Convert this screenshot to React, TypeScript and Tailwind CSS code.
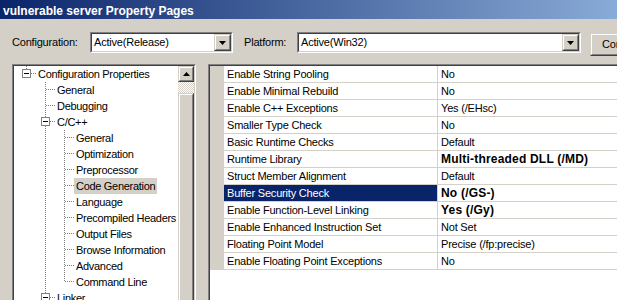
import React from 'react';

type TreeNode = {
  label: string;
  guides: boolean[];
  up: boolean;
  down: boolean;
  box?: boolean;
  selected?: boolean;
};

const L2 = (label: string, last = false, selected = false): TreeNode => ({
  label,
  guides: [false, true],
  up: true,
  down: !last,
  selected,
});

const TREE: TreeNode[] = [
  { label: 'Configuration Properties', guides: [], up: true, down: false, box: true },
  { label: 'General', guides: [false], up: true, down: true },
  { label: 'Debugging', guides: [false], up: true, down: true },
  { label: 'C/C++', guides: [false], up: true, down: true, box: true },
  L2('General'),
  L2('Optimization'),
  L2('Preprocessor'),
  L2('Code Generation', false, true),
  L2('Language'),
  L2('Precompiled Headers'),
  L2('Output Files'),
  L2('Browse Information'),
  L2('Advanced'),
  L2('Command Line', true),
  { label: 'Linker', guides: [false], up: true, down: true, box: true },
];

const PROPS = [
  { name: 'Enable String Pooling', value: 'No' },
  { name: 'Enable Minimal Rebuild', value: 'No' },
  { name: 'Enable C++ Exceptions', value: 'Yes (/EHsc)' },
  { name: 'Smaller Type Check', value: 'No' },
  { name: 'Basic Runtime Checks', value: 'Default' },
  { name: 'Runtime Library', value: 'Multi-threaded DLL (/MD)', bold: true },
  { name: 'Struct Member Alignment', value: 'Default' },
  { name: 'Buffer Security Check', value: 'No (/GS-)', bold: true, selected: true },
  { name: 'Enable Function-Level Linking', value: 'Yes (/Gy)', bold: true },
  { name: 'Enable Enhanced Instruction Set', value: 'Not Set' },
  { name: 'Floating Point Model', value: 'Precise (/fp:precise)' },
  { name: 'Enable Floating Point Exceptions', value: 'No' },
];

function Raised({ className = '', inner = '', children }: { className?: string; inner?: string; children?: React.ReactNode }) {
  return (
    <div className={`border border-t-[#d4d0c8] border-l-[#d4d0c8] border-b-[#404040] border-r-[#404040] ${className}`}>
      <div className={`h-full w-full border border-t-white border-l-white border-b-[#808080] border-r-[#808080] bg-[#d4d0c8] ${inner}`}>
        {children}
      </div>
    </div>
  );
}

function Sunken({ className = '', inner = '', children }: { className?: string; inner?: string; children?: React.ReactNode }) {
  return (
    <div className={`border border-t-[#808080] border-l-[#808080] border-b-white border-r-white ${className}`}>
      <div className={`h-full w-full border border-t-[#404040] border-l-[#404040] border-b-[#d4d0c8] border-r-[#d4d0c8] ${inner}`}>
        {children}
      </div>
    </div>
  );
}

function DownArrow() {
  return (
    <svg width="7" height="4" viewBox="0 0 7 4" className="block">
      <path d="M0 0h7L3.5 4z" fill="#000" />
    </svg>
  );
}

function Combo({ value, width }: { value: string; width: string }) {
  return (
    <Sunken className={`h-[21px] ${width}`} inner="bg-white flex">
      <span className="flex-1 pl-[2px] leading-[17px] whitespace-nowrap">{value}</span>
      <Raised className="w-[17px] h-full" inner="flex items-center justify-center">
        <DownArrow />
      </Raised>
    </Sunken>
  );
}

function Guide({ on }: { on: boolean }) {
  return (
    <svg width="19" height="16" className="block shrink-0">
      {on && <line x1="9.5" y1="0" x2="9.5" y2="16" stroke="#808080" strokeDasharray="1 1" />}
    </svg>
  );
}

function Connector({ up, down, box }: { up: boolean; down: boolean; box?: boolean }) {
  return (
    <svg width="19" height="16" className="block shrink-0">
      {up && <line x1="9.5" y1="0" x2="9.5" y2="7" stroke="#808080" strokeDasharray="1 1" />}
      {down && <line x1="9.5" y1="8" x2="9.5" y2="16" stroke="#808080" strokeDasharray="1 1" />}
      <line x1={box ? 14 : 10} y1="7.5" x2="19" y2="7.5" stroke="#808080" strokeDasharray="1 1" />
      {box && (
        <>
          <rect x="5.5" y="3.5" width="8" height="8" fill="#fff" stroke="#808080" />
          <line x1="7" y1="7.5" x2="12" y2="7.5" stroke="#000" />
        </>
      )}
    </svg>
  );
}

export default function App() {
  return (
    <div className="w-[617px] h-[300px] overflow-hidden bg-[#d4d0c8] flex flex-col font-['Liberation_Sans',Arial,sans-serif] text-[11px] tracking-[-0.2px] text-black">
      <div className="h-[19px] shrink-0 flex items-center pl-[3px] pt-[2px] bg-[image:linear-gradient(to_right,#0a246a,#a6caf0_760px)]">
        <span className="text-white font-bold text-[12px] tracking-normal whitespace-nowrap">vulnerable server Property Pages</span>
      </div>

      <div className="mt-[13px] h-[23px] shrink-0 flex items-start pl-[12px]">
        <span className="w-[78px] shrink-0 leading-[21px]">Configuration:</span>
        <Combo value="Active(Release)" width="w-[143px] shrink-0" />
        <span className="ml-[11px] w-[53px] shrink-0 leading-[21px]">Platform:</span>
        <Combo value="Active(Win32)" width="w-[284px] shrink-0" />
        <Raised className="ml-[9px] mt-[1px] w-[140px] h-[23px] shrink-0" inner="flex items-center pl-[10px]">
          <span className="whitespace-nowrap">Configuration Manager...</span>
        </Raised>
      </div>

      <div className="mt-[9px] flex flex-1 min-h-0 pl-[12px]">
        <Sunken className="w-[184px] h-[260px] shrink-0" inner="bg-white flex">
          <div className="flex-1 overflow-hidden">
            {TREE.map((n, i) => (
              <div key={i} className="flex h-[16px] items-center pl-[3px]">
                {n.guides.map((g, j) => (
                  <Guide key={j} on={g} />
                ))}
                <Connector up={n.up} down={n.down} box={n.box} />
                <span className={`px-[2px] leading-[16px] tracking-[-0.3px] whitespace-nowrap ${n.selected ? 'bg-[#d4d0c8]' : ''}`}>{n.label}</span>
              </div>
            ))}
          </div>
          <div className="w-[16px] shrink-0 flex flex-col">
            <Raised className="h-[16px] shrink-0" inner="flex items-center justify-center">
              <svg width="7" height="4" viewBox="0 0 7 4" className="block">
                <path d="M3.5 0L7 4H0z" fill="#000" />
              </svg>
            </Raised>
            <div className="h-[11px] shrink-0 bg-[image:repeating-conic-gradient(#fff_0_25%,#d4d0c8_0_50%)] bg-[length:2px_2px]" />
            <Raised className="flex-1" />
          </div>
        </Sunken>

        <Sunken className="ml-[12px] w-[440px] h-[260px] shrink-0" inner="bg-white flex flex-col">
          {PROPS.map((p, i) => (
            <div key={i} className="flex h-[17px] shrink-0">
              <div className="w-[14px] shrink-0 bg-[#d4d0c8]" />
              <div
                className={`w-[214px] shrink-0 border-b border-r border-[#d4d0c8] pl-[3px] leading-[16px] whitespace-nowrap ${
                  p.selected ? 'bg-[#0a246a] text-white' : ''
                }`}
              >
                {p.name}
              </div>
              <div className={`flex-1 border-b border-[#d4d0c8] pl-[3px] leading-[16px] whitespace-nowrap ${p.bold ? 'font-bold text-[12px] tracking-[0.2px]' : ''}`}>
                {p.value}
              </div>
            </div>
          ))}
        </Sunken>
      </div>
    </div>
  );
}
